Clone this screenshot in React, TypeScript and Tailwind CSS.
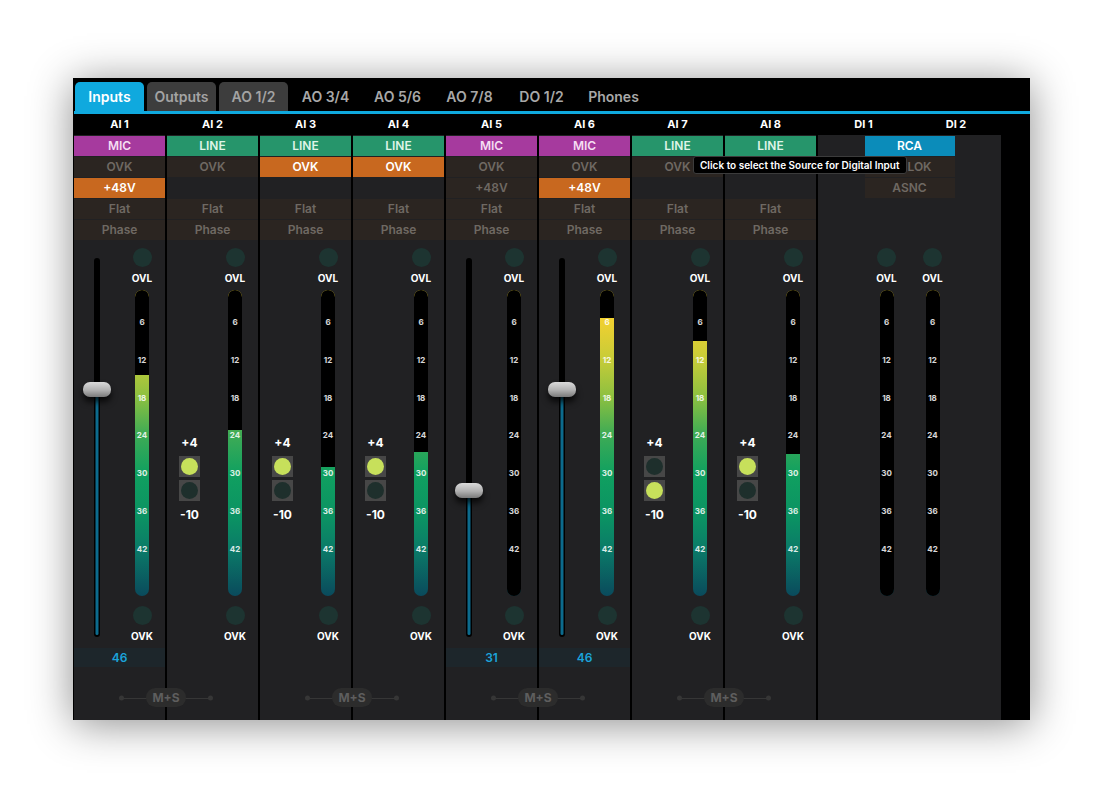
import React from "react";

type Kind = "mic" | "line" | "orange" | "off" | "rca";
type Btn = { label: string; kind: Kind } | null;
type Left = { type: "fader"; thumb: number } | { type: "switch"; top: boolean };
type Ch = { name: string; rows: Btn[]; left: Left; level: number | null; value?: string };

const kindCls: Record<Kind, string> = {
  mic: "bg-[#a63a9e] text-[#f5def3]",
  line: "bg-[#26956b] text-[#dff5e8]",
  orange: "bg-[#c8681f] text-white",
  off: "bg-[#2b2521] text-[#6f6963]",
  rca: "bg-[#0b8cba] text-white",
};

const b = (label: string, kind: Kind): Btn => ({ label, kind });

const channels: Ch[] = [
  { name: "AI 1", rows: [b("MIC", "mic"), b("OVK", "off"), b("+48V", "orange"), b("Flat", "off"), b("Phase", "off")], left: { type: "fader", thumb: 389 }, level: 375, value: "46" },
  { name: "AI 2", rows: [b("LINE", "line"), b("OVK", "off"), null, b("Flat", "off"), b("Phase", "off")], left: { type: "switch", top: true }, level: 430 },
  { name: "AI 3", rows: [b("LINE", "line"), b("OVK", "orange"), null, b("Flat", "off"), b("Phase", "off")], left: { type: "switch", top: true }, level: 467 },
  { name: "AI 4", rows: [b("LINE", "line"), b("OVK", "orange"), null, b("Flat", "off"), b("Phase", "off")], left: { type: "switch", top: true }, level: 452 },
  { name: "AI 5", rows: [b("MIC", "mic"), b("OVK", "off"), b("+48V", "off"), b("Flat", "off"), b("Phase", "off")], left: { type: "fader", thumb: 490 }, level: null, value: "31" },
  { name: "AI 6", rows: [b("MIC", "mic"), b("OVK", "off"), b("+48V", "orange"), b("Flat", "off"), b("Phase", "off")], left: { type: "fader", thumb: 389 }, level: 318, value: "46" },
  { name: "AI 7", rows: [b("LINE", "line"), b("OVK", "off"), null, b("Flat", "off"), b("Phase", "off")], left: { type: "switch", top: false }, level: 341 },
  { name: "AI 8", rows: [b("LINE", "line"), null, null, b("Flat", "off"), b("Phase", "off")], left: { type: "switch", top: true }, level: 454 },
];

function RowBtn({ btn, w = "w-full", extra = "" }: { btn: Btn; w?: string; extra?: string }) {
  if (!btn) return <div className={`h-[20px] ${w}`} />;
  return (
    <div className={`h-[20px] ${w} flex items-center justify-center text-[12px] font-semibold ${kindCls[btn.kind]} ${extra}`}>
      {btn.label}
    </div>
  );
}

function Meter({ fillTop }: { fillTop: number | null }) {
  const cover = fillTop === null ? 306 : fillTop - 290;
  return (
    <div className="relative w-[14px] h-[306px] rounded-full overflow-hidden bg-[linear-gradient(to_bottom,#f6da2c_0%,#f0d030_10%,#c9cc38_22%,#8cc040_35%,#3fab55_47%,#10a060_60%,#0b9163_75%,#0b7a68_85%,#0a4a5c_100%)]">
      <div className="absolute inset-x-0 top-0 bg-black" style={{ height: cover }} />
      <div className="absolute inset-x-0 top-[26px] flex flex-col items-center gap-[25.8px]">
        {["6", "12", "18", "24", "30", "36", "42"].map((s) => (
          <div key={s} className="h-[12px] leading-[12px] text-[8px] font-bold text-white/85">
            {s}
          </div>
        ))}
      </div>
    </div>
  );
}

function Led() {
  return <div className="w-[19px] h-[19px] rounded-full bg-[#1d3431]" />;
}

function MeterStack({ fillTop, ovk = true }: { fillTop: number | null; ovk?: boolean }) {
  return (
    <div className="w-[46px] flex flex-col items-center pt-[8px]">
      <Led />
      <div className="mt-[4px] h-[14px] leading-[14px] text-[10px] font-bold text-white">OVL</div>
      <div className="mt-[5px]">
        <Meter fillTop={fillTop} />
      </div>
      {ovk && (
        <>
          <div className="mt-[10px]">
            <Led />
          </div>
          <div className="mt-[4px] h-[14px] leading-[14px] text-[10px] font-bold text-white">OVK</div>
        </>
      )}
    </div>
  );
}

function Fader({ thumb }: { thumb: number }) {
  const t = thumb - 258;
  return (
    <div className="relative w-[6px] h-[379px] rounded-full bg-black">
      <div className="absolute left-1/2 -translate-x-1/2 w-[3px] bottom-[2px] rounded-full bg-[#0c6b8d]" style={{ top: t }} />
      <div
        className="absolute left-1/2 -translate-x-1/2 w-[28px] h-[15px] rounded-[7px] bg-[linear-gradient(to_bottom,#dadada,#b0b0b0_55%,#7a7a7a)] shadow-[0_5px_6px_rgba(0,0,0,0.75)]"
        style={{ top: t - 7.5 }}
      />
    </div>
  );
}

function SwBtn({ on, cls }: { on: boolean; cls: string }) {
  return (
    <div className={`w-[21px] h-[21px] bg-[#474747] flex items-center justify-center ${cls}`}>
      <div className={`w-[17px] h-[17px] rounded-full ${on ? "bg-[#c7e05b]" : "bg-[#1e2f2c]"}`} />
    </div>
  );
}

function Switch({ top }: { top: boolean }) {
  return (
    <div className="flex flex-col items-center pt-[196px]">
      <div className="h-[14px] leading-[14px] text-[12px] font-bold text-white">+4</div>
      <SwBtn on={top} cls="mt-[6px]" />
      <SwBtn on={!top} cls="mt-[3px]" />
      <div className="mt-[7px] h-[14px] leading-[14px] text-[12px] font-bold text-white">-10</div>
    </div>
  );
}

function Channel({ ch }: { ch: Ch }) {
  return (
    <div className="w-[91px] bg-[#212123] flex flex-col">
      <div className="pt-[1px] flex flex-col gap-[1px]">
        {ch.rows.map((r, i) => (
          <RowBtn key={i} btn={r} />
        ))}
      </div>
      <div className="h-[408px] flex">
        <div className="w-[45px] flex flex-col items-center">
          {ch.left.type === "fader" ? (
            <div className="pt-[18px]">
              <Fader thumb={ch.left.thumb} />
            </div>
          ) : (
            <Switch top={ch.left.top} />
          )}
        </div>
        <MeterStack fillTop={ch.level} />
      </div>
      {ch.value ? (
        <div className="h-[19px] bg-[#1d262b] flex items-center justify-center text-[12px] font-semibold text-[#1ba3da]">
          {ch.value}
        </div>
      ) : (
        <div className="h-[19px]" />
      )}
    </div>
  );
}

function MS() {
  return (
    <div className="absolute bottom-[13px] left-1/2 -translate-x-1/2 w-[94px] h-[19px] flex items-center justify-center">
      <div className="absolute left-[2px] right-[2px] top-1/2 h-px bg-[#363636]" />
      <div className="absolute left-0 top-1/2 -translate-y-1/2 w-[5px] h-[5px] rounded-full bg-[#363636]" />
      <div className="absolute right-0 top-1/2 -translate-y-1/2 w-[5px] h-[5px] rounded-full bg-[#363636]" />
      <div className="relative h-[19px] px-[6px] rounded-full bg-[#2c2c2c] text-[12px] leading-[19px] font-bold text-[#5e5e5e]">
        M+S
      </div>
    </div>
  );
}

const tabs = [
  { label: "Inputs", cls: "bg-[#0fa9de] text-white" },
  { label: "Outputs", cls: "bg-[#3d3d3d] text-[#a3a3a3]" },
  { label: "AO 1/2", cls: "bg-[#3d3d3d] text-[#a3a3a3]" },
  { label: "AO 3/4", cls: "text-[#a8a8a8]" },
  { label: "AO 5/6", cls: "text-[#a8a8a8]" },
  { label: "AO 7/8", cls: "text-[#a8a8a8]" },
  { label: "DO 1/2", cls: "text-[#a8a8a8]" },
  { label: "Phones", cls: "text-[#a8a8a8]" },
];

export default function App() {
  const pairs = [0, 2, 4, 6];
  return (
    <div className="w-[1100px] h-[790px] bg-white pt-[78px] pl-[73px] font-['Inter','Noto_Sans',sans-serif]">
      <div className="relative w-[957px] h-[642px] bg-black shadow-[0_4px_40px_rgba(0,0,0,0.45)] flex flex-col overflow-hidden">
        <div className="h-[33px] pt-[4px] pl-[2px] flex gap-[3px] shrink-0">
          {tabs.map((t) => (
            <div key={t.label} className={`w-[69px] h-[29px] rounded-t-[5px] flex items-center justify-center text-[14px] font-semibold ${t.cls}`}>
              {t.label}
            </div>
          ))}
        </div>
        <div className="h-[3px] ml-[1px] bg-[#0fa9de] shrink-0" />
        <div className="h-[21px] pl-[1px] flex gap-[2px] items-center shrink-0">
          {channels.map((c) => (
            <div key={c.name} className="w-[91px] text-center text-[11px] font-bold text-white">
              {c.name}
            </div>
          ))}
          <div className="w-[91px] text-center text-[11px] font-bold text-white">DI 1</div>
          <div className="w-[90px] text-center text-[11px] font-bold text-white">DI 2</div>
        </div>
        <div className="flex-1 pl-[1px] flex gap-[2px] min-h-0">
          {pairs.map((p) => (
            <div key={p} className="relative flex gap-[2px]">
              <Channel ch={channels[p]} />
              <Channel ch={channels[p + 1]} />
              <MS />
            </div>
          ))}
          <div className="w-[183px] bg-[#212123] flex flex-col">
            <div className="pt-[1px] flex flex-col gap-[1px] items-center">
              <RowBtn btn={b("RCA", "rca")} w="w-[90px]" />
              <RowBtn btn={b("LOK", "off")} w="w-[90px]" extra="pl-[20px]" />
              <RowBtn btn={b("ASNC", "off")} w="w-[90px]" />
              <RowBtn btn={null} w="w-[90px]" />
              <RowBtn btn={null} w="w-[90px]" />
            </div>
            <div className="flex justify-center">
              <MeterStack fillTop={null} ovk={false} />
              <MeterStack fillTop={null} ovk={false} />
            </div>
          </div>
        </div>
        <div className="absolute left-[620px] top-[78px] h-[18px] px-[6px] flex items-center rounded-[3px] border border-[#3c3c3c] bg-black text-[10px] font-semibold text-white whitespace-nowrap">
          Click to select the Source for Digital Input
        </div>
      </div>
    </div>
  );
}
